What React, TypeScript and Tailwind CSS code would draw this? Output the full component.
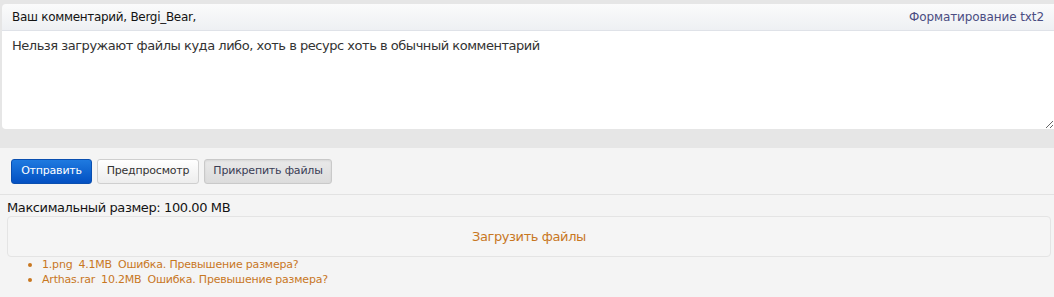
export default function App() {
  const files = [
    { name: '1.png', size: '4.1MB' },
    { name: 'Arthas.rar', size: '10.2MB' },
  ];

  return (
    <div className="w-[1054px] h-[297px] bg-[#f4f4f4] overflow-hidden" style={{ fontFamily: '"DejaVu Sans", Tahoma, sans-serif' }}>
      {/* Comment editor */}
      <div className="bg-[#e6e6e6] pt-[4px] pb-[19px] pl-[2px]">
        <div className="flex items-center justify-between h-[27px] px-[10px] rounded-tl-[4px] bg-gradient-to-b from-[#fbfbfb] to-[#eef0f3] border-b border-[#dfe2e8] text-[12px] tracking-[-0.3px]">
          <span className="text-[#141414]">Ваш комментарий, Bergi_Bear,</span>
          <span className="text-[#4b4d82] tracking-[-0.1px]">Форматирование txt2</span>
        </div>
        <textarea
          className="block w-full h-[98px] resize-y bg-white rounded-bl-[4px] px-[10px] py-[5px] text-[13px] tracking-[-0.47px] text-[#333] outline-none"
          defaultValue="Нельзя загружают файлы куда либо, хоть в ресурс хоть в обычный комментарий"
        />
      </div>

      {/* Actions */}
      <div className="flex gap-[5px] px-[11px] pt-[11px] pb-[10px] border-b border-[#e2e2e2] text-[11px] tracking-[-0.2px]">
        <button className="h-[25px] w-[81px] rounded-[3px] border border-[#0a4fb0] bg-gradient-to-b from-[#1f7ae0] to-[#0450c2] text-white">
          Отправить
        </button>
        <button className="h-[25px] w-[102px] rounded-[3px] border border-[#cfcfcf] bg-gradient-to-b from-[#ffffff] to-[#ededed] text-[#333]">
          Предпросмотр
        </button>
        <button className="h-[25px] w-[128px] rounded-[3px] border border-[#c9c9c9] bg-gradient-to-b from-[#e9e9e9] to-[#dcdcdc] text-[#3a3d55] shadow-[inset_0_1px_2px_rgba(0,0,0,0.08)]">
          Прикрепить файлы
        </button>
      </div>

      {/* Upload */}
      <div className="px-[7px] pt-[5px]">
        <div className="text-[13px] leading-[16px] tracking-[-0.4px] text-[#141414]">Максимальный размер: 100.00 MB</div>
        <div className="mr-[-4px] h-[41px] flex items-center justify-center rounded-[4px] border border-[#e4e4e4] bg-[#f5f5f5] text-[13px] tracking-[-0.4px] text-[#c8771f]">
          Загрузить файлы
        </div>
        <ul className="mt-[0px] pl-[21px] text-[11px] leading-[15px] tracking-[-0.2px] text-[#c8771f]">
          {files.map((f) => (
            <li key={f.name} className="flex items-center">
              <span className="w-[4px] h-[4px] rounded-full bg-[#c8771f] mr-[10px]" />
              <span>{f.name}</span>
              <span className="ml-[6px]">{f.size}</span>
              <span className="ml-[6px]">Ошибка. Превышение размера?</span>
            </li>
          ))}
        </ul>
      </div>
    </div>
  );
}
